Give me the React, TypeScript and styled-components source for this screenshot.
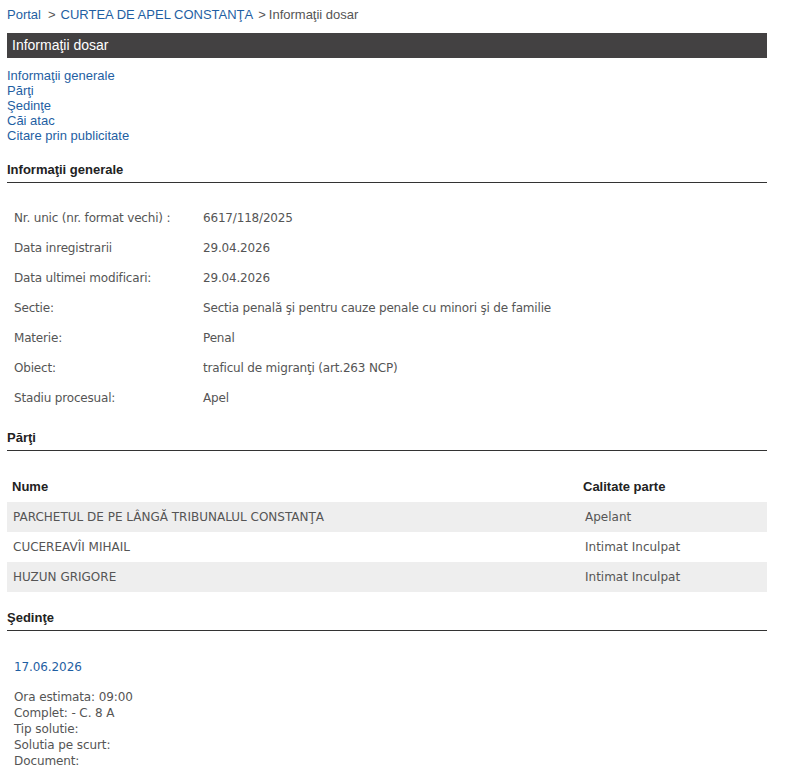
import React from 'react';
import styled, { createGlobalStyle } from 'styled-components';

const GlobalStyle = createGlobalStyle`
	body {
		margin: 0;
		background: #ffffff;
		font-family: "Liberation Sans", Arial, sans-serif;
	}
`;

const Page = styled.div`
	width: 760px;
	margin-left: 7px;
	padding-top: 7px;
`;

const Breadcrumb = styled.div`
	font-size: 13px;
	line-height: 16px;
	color: #555555;
	margin-bottom: 10px;
`;

const Crumb = styled.a`
	color: #1f5fa3;
	text-decoration: none;
`;

const Sep = styled.span<{ $left: number; $right: number }>`
	margin: 0 ${p => p.$right}px 0 ${p => p.$left}px;
`;

const TitleBar = styled.div`
	height: 25px;
	background: #434142;
	color: #ffffff;
	font-size: 14px;
	line-height: 25px;
	padding-left: 5px;
`;

const Anchors = styled.div`
	margin-top: 10px;
	display: flex;
	flex-direction: column;
	font-size: 13px;
	line-height: 15px;
`;

const AnchorLink = styled.a`
	color: #1f5fa3;
	text-decoration: none;
`;

const SectionTitle = styled.div<{ $top: number }>`
	margin-top: ${p => p.$top}px;
	font-size: 13px;
	font-weight: bold;
	line-height: 16px;
	color: #222222;
	padding-bottom: 4px;
	border-bottom: 1px solid #333333;
`;

const InfoTable = styled.div`
	margin-top: 20px;
	display: grid;
	grid-template-columns: 189px 1fr;
	grid-auto-rows: 30px;
	padding-left: 7px;
	font-family: "DejaVu Sans", Verdana, sans-serif;
	font-size: 12px;
	letter-spacing: -0.18px;
	color: #555555;
	align-items: center;
`;

const Cell = styled.div``;

const PartyTable = styled.div`
	margin-top: 19px;
	display: flex;
	flex-direction: column;
`;

const PartyRow = styled.div<{ $shade?: boolean; $head?: boolean }>`
	display: grid;
	grid-template-columns: 571px 1fr;
	height: ${p => (p.$head ? 32 : 30)}px;
	align-items: center;
	padding-left: ${p => (p.$head ? 5 : 6)}px;
	background: ${p => (p.$shade ? '#eeeeee' : 'transparent')};
	font-family: ${p => (p.$head ? '"Liberation Sans", Arial, sans-serif' : '"DejaVu Sans", Verdana, sans-serif')};
	font-size: ${p => (p.$head ? 13 : 12)}px;
	font-weight: ${p => (p.$head ? 'bold' : 'normal')};
	color: ${p => (p.$head ? '#222222' : '#555555')};
`;

const PartyRole = styled.div<{ $head?: boolean }>`
	padding-left: ${p => (p.$head ? 0 : 1)}px;
`;

const Hearing = styled.div`
	margin-top: 28px;
	padding-left: 7px;
	font-family: "DejaVu Sans", Verdana, sans-serif;
	font-size: 12px;
	letter-spacing: -0.1px;
	color: #555555;
`;

const HearingDate = styled.div`
	color: #1f5fa3;
	line-height: 16px;
	margin-bottom: 14px;
`;

const HearingLine = styled.div`
	line-height: 16px;
`;

const info: [string, string][] = [
	['Nr. unic (nr. format vechi) :', '6617/118/2025'],
	['Data inregistrarii', '29.04.2026'],
	['Data ultimei modificari:', '29.04.2026'],
	['Sectie:', 'Sectia penală şi pentru cauze penale cu minori şi de familie'],
	['Materie:', 'Penal'],
	['Obiect:', 'traficul de migranţi (art.263 NCP)'],
	['Stadiu procesual:', 'Apel'],
];

const parties: [string, string][] = [
	['PARCHETUL DE PE LÂNGĂ TRIBUNALUL CONSTANŢA', 'Apelant'],
	['CUCEREAVÎI MIHAIL', 'Intimat Inculpat'],
	['HUZUN GRIGORE', 'Intimat Inculpat'],
];

const hearingLines = [
	'Ora estimata: 09:00',
	'Complet: - C. 8 A',
	'Tip solutie:',
	'Solutia pe scurt:',
	'Document:',
];

const App = () => {
	return (
		<Page>
			<GlobalStyle />
			<Breadcrumb>
				<Crumb href="#">Portal</Crumb>
				<Sep $left={7} $right={5}>&gt;</Sep>
				<Crumb href="#">CURTEA DE APEL CONSTANŢA</Crumb>
				<Sep $left={5} $right={3}>&gt;</Sep>
				Informaţii dosar
			</Breadcrumb>
			<TitleBar>Informaţii dosar</TitleBar>
			<Anchors>
				<AnchorLink href="#">Informaţii generale</AnchorLink>
				<AnchorLink href="#">Părţi</AnchorLink>
				<AnchorLink href="#">Şedinţe</AnchorLink>
				<AnchorLink href="#">Căi atac</AnchorLink>
				<AnchorLink href="#">Citare prin publicitate</AnchorLink>
			</Anchors>

			<SectionTitle $top={19}>Informaţii generale</SectionTitle>
			<InfoTable>
				{info.map(([label, value]) => (
					<React.Fragment key={label}>
						<Cell>{label}</Cell>
						<Cell>{value}</Cell>
					</React.Fragment>
				))}
			</InfoTable>

			<SectionTitle $top={17}>Părţi</SectionTitle>
			<PartyTable>
				<PartyRow $head>
					<div>Nume</div>
					<PartyRole $head>Calitate parte</PartyRole>
				</PartyRow>
				{parties.map(([name, role], i) => (
					<PartyRow key={name} $shade={i % 2 === 0}>
						<div>{name}</div>
						<PartyRole>{role}</PartyRole>
					</PartyRow>
				))}
			</PartyTable>

			<SectionTitle $top={18}>Şedinţe</SectionTitle>
			<Hearing>
				<HearingDate>17.06.2026</HearingDate>
				{hearingLines.map(line => (
					<HearingLine key={line}>{line}</HearingLine>
				))}
			</Hearing>
		</Page>
	);
};

export default App;
